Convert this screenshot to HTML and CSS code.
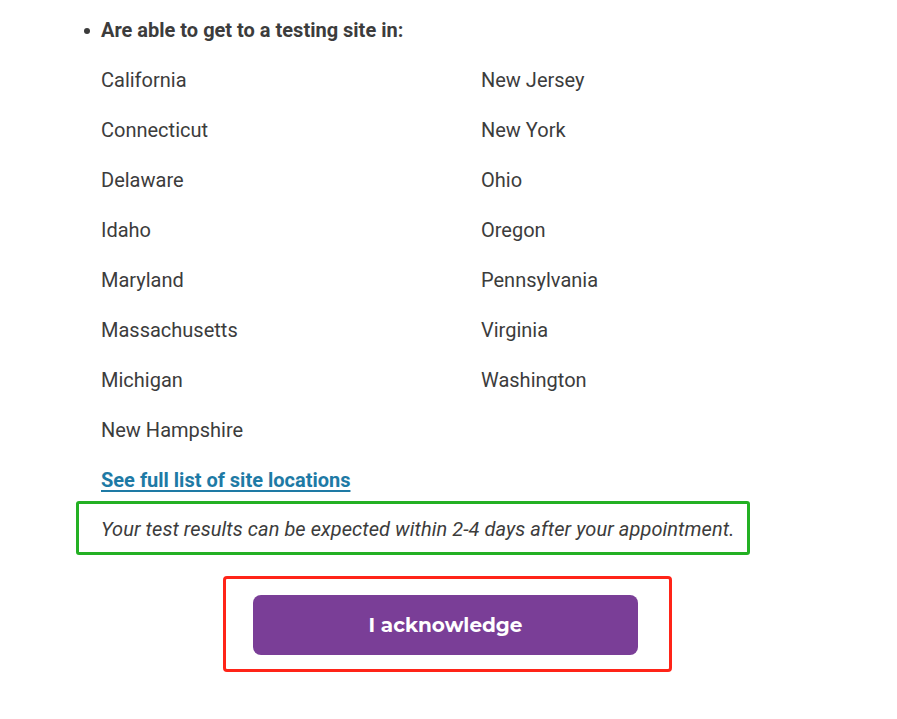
FILE: index.html
```html
<!DOCTYPE html>
<html>
<head>
<meta charset="utf-8">
<link rel="stylesheet" href="styles.css">
</head>
<body>
<div class="page">
  <ul class="reqs">
    <li class="req">Are able to get to a testing site in:</li>
  </ul>
  <div class="states">
    <div class="state">California</div>
    <div class="state">New Jersey</div>
    <div class="state">Connecticut</div>
    <div class="state">New York</div>
    <div class="state">Delaware</div>
    <div class="state">Ohio</div>
    <div class="state">Idaho</div>
    <div class="state">Oregon</div>
    <div class="state">Maryland</div>
    <div class="state">Pennsylvania</div>
    <div class="state">Massachusetts</div>
    <div class="state">Virginia</div>
    <div class="state">Michigan</div>
    <div class="state">Washington</div>
    <div class="state">New Hampshire</div>
  </div>
  <div class="link-row"><a class="link" href="#">See full list of site locations</a></div>
  <div class="note">Your test results can be expected within 2-4 days after your appointment.</div>
  <div class="ack-box">
    <button class="ack">I acknowledge</button>
  </div>
</div>
</body>
</html>
```
FILE: styles.css
```css
html, body {
  margin: 0;
  padding: 0;
  background: #ffffff;
}
.page {
  font-family: Roboto, "Liberation Sans", sans-serif;
  font-size: 20px;
  color: #3c3c3c;
  padding: 5px 0 0 101px;
}
.reqs {
  margin: 0;
  padding: 0;
  list-style: none;
}
.req {
  font-weight: 700;
  line-height: 50px;
  position: relative;
}
.req::before {
  content: "";
  position: absolute;
  left: -17px;
  top: 23px;
  width: 6px;
  height: 6px;
  border-radius: 50%;
  background: #3c3c3c;
}
.states {
  display: grid;
  grid-template-columns: 380px 380px;
  grid-auto-rows: 50px;
  align-items: center;
}
.state {
  line-height: 50px;
}
.link-row {
  line-height: 50px;
}
.link {
  color: #1e7aa5;
  font-weight: 700;
  text-decoration: underline;
  text-underline-offset: 3px;
  text-decoration-thickness: 2px;
}
.note {
  display: inline-block;
  margin: -4px 0 0 -25px;
  padding: 2px 13px 0 22px;
  border: 3px solid #23b023;
  border-radius: 3px;
  font-style: italic;
  letter-spacing: 0.07px;
  line-height: 46px;
}
.ack-box {
  width: fit-content;
  margin: 21px 0 0 122px;
  padding: 16px 31px 14px 27px;
  border: 3px solid #ff2418;
  border-radius: 4px;
}
.ack {
  display: block;
  width: 385px;
  height: 60px;
  border: none;
  border-radius: 8px;
  background: #7a3e97;
  color: #ffffff;
  font-family: Montserrat, "Open Sans", sans-serif;
  font-weight: 700;
  font-size: 20px;
  cursor: pointer;
}
```
